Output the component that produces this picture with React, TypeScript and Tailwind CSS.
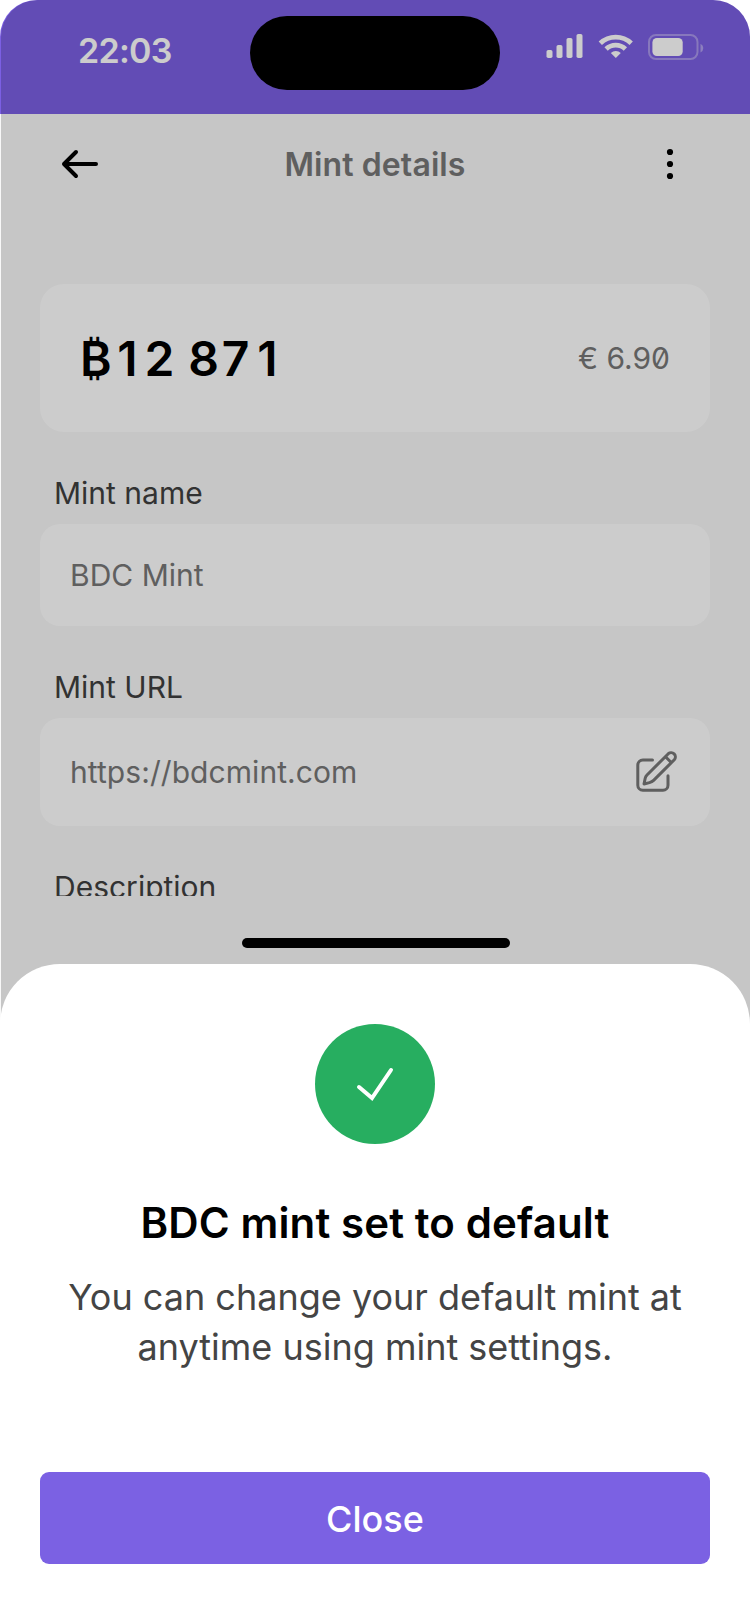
import type { ReactNode } from "react";

function StatusBar() {
  return (
    <header className="flex h-[114px] items-start justify-between rounded-t-[37px] bg-[#7b5fe3] pl-[78px] pr-[45px]">
      <div className="mt-[30px] w-[172px] text-[34px] font-semibold leading-[42px] tracking-[-0.7px] text-white">22:03</div>
      <svg className="mt-[33px] h-[28px] w-[159px]" viewBox="546 33 159 28" fill="#fff">
        <rect x="546.5" y="50" width="6" height="8" rx="1.8" />
        <rect x="556.5" y="45" width="6" height="13" rx="1.8" />
        <rect x="566.5" y="38" width="6" height="20" rx="1.8" />
        <rect x="576.5" y="34" width="6" height="24" rx="1.8" />
        <g fill="none" stroke="#fff" strokeWidth="4.8">
          <path d="M600.3 43.2a22.5 22.5 0 0 1 30.9 0" />
          <path d="M606.1 49a14 14 0 0 1 19.3 0" />
        </g>
        <path d="M615.8 57.9l-5-4.9a7.6 7.6 0 0 1 10 0z" />
        <rect x="649" y="35" width="48.500" height="24" rx="7" fill="none" stroke="#fff" strokeWidth="2" opacity=".35" />
        <rect x="652.4" y="38" width="30.3" height="18" rx="4.5" />
        <path d="M700.5 43.8v8.6a4.7 4.7 0 0 0 0-8.6z" opacity=".4" />
      </svg>
    </header>
  );
}

function NavBar() {
  return (
    <nav className="flex h-[100px] items-center justify-between pl-[60px] pr-[60px]">
      <svg className="h-10 w-10" viewBox="0 0 40 40" fill="none" stroke="#000" strokeWidth="4" strokeLinecap="round" strokeLinejoin="round">
        <path d="M36 20H4M16 8L4 20l12 12" />
      </svg>
      <h1 className="pt-[2px] text-[32px] font-semibold leading-[40px] tracking-[0.1px] text-[#777]">Mint details</h1>
      <svg className="h-10 w-10" viewBox="0 0 40 40">
        <circle cx="20" cy="8" r="3.1" />
        <circle cx="20" cy="20" r="3.1" />
        <circle cx="20" cy="32" r="3.1" />
      </svg>
    </nav>
  );
}

function Amount({ value }: { value: string }) {
  return (
    <div className="flex whitespace-pre pt-[2px] text-[48px] font-semibold leading-[58px] text-black">
      <span className="w-[31.500px]">₿</span>
      {value.split("").map((char, i) => (
        <span key={i} className={char === " " ? "w-[12px]" : "w-[32px] text-center"}>
          {char}
        </span>
      ))}
    </div>
  );
}

function Label({ children }: { children: ReactNode }) {
  return <div className="mb-[13px] mt-[43px] pl-[14px] text-[30px] leading-[36px] text-[#3f3f3f]">{children}</div>;
}

function EditIcon() {
  return (
    <svg className="mb-[2px] h-[44px] w-[44px]" viewBox="35 49 44 44" fill="none" stroke="#777" strokeWidth="3" strokeLinecap="round" strokeLinejoin="round">
      <path d="M52.5 60H42.8a5 5 0 0 0-5 5v20.2a5 5 0 0 0 5 5H63a5 5 0 0 0 5-5v-9.5" />
      <path d="M68.3 53.7a4.25 4.25 0 0 1 6 6L53.6 80.4Q52 82 49.500 82.600L44 84l1.200-5.800Q45.600 76.400 47 75zM66 57.200l5 5" />
    </svg>
  );
}

export default function App() {
  return (
    <div className="relative flex h-[1624px] w-[750px] flex-col overflow-hidden bg-white font-['Inter',sans-serif]">
      <StatusBar />
      <div className="h-[910px] bg-[#f8f8f8]">
        <NavBar />
        <main className="h-[682px] overflow-hidden px-10 pt-[70px]">
          <section className="flex h-[148px] items-center justify-between rounded-[24px] bg-white px-10">
            <Amount value="12 871" />
            <span className="text-[30px] leading-[36px] text-[#777] [font-feature-settings:'zero']">€ 6.90</span>
          </section>
          <Label>Mint name</Label>
          <div className="flex h-[102px] items-center rounded-[20px] bg-white px-[30px] text-[30px] leading-[36px] text-[#777]">BDC Mint</div>
          <Label>Mint URL</Label>
          <div className="flex h-[108px] items-center justify-between rounded-[20px] bg-white pl-[30px] pr-[31px] text-[30px] leading-[36px] text-[#777]">
            <span className="tracking-[0.07px]">https://bdcmint.com</span>
            <EditIcon />
          </div>
          <Label>Description</Label>
        </main>
      </div>
      <div className="absolute bottom-0 left-px right-0 top-0 rounded-t-[37px] bg-black/20" />
      <div className="absolute left-[250px] top-[16px] h-[74px] w-[250px] rounded-full bg-black" />
      <div className="absolute left-[242px] top-[938px] h-[10px] w-[268px] rounded-full bg-black" />
      <section className="absolute bottom-0 left-0 right-0 flex h-[660px] flex-col items-center rounded-t-[60px] bg-white px-10 pt-[60px]">
        <div className="flex h-[120px] w-[120px] items-center justify-center rounded-full bg-[#27ae60]">
          <svg className="h-10 w-10" viewBox="0 0 40 40" fill="none" stroke="#fff" strokeWidth="4" strokeLinecap="round">
            <path d="M4 23l13 11L36 6" />
          </svg>
        </div>
        <h2 className="mt-[54px] text-[42px] font-semibold leading-[50px] tracking-[0.12px] text-black">BDC mint set to default</h2>
        <p className="mt-[24px] text-center text-[36px] leading-[50px] text-[#444]">
          You can change your default mint at
          <br />
          anytime using mint settings.
        </p>
        <button className="mt-[100px] h-[92px] w-full shrink-0 rounded-[9px] bg-[#7b61e3] pt-[2px] text-[36px] font-medium leading-[44px] text-white">Close</button>
      </section>
    </div>
  );
}
